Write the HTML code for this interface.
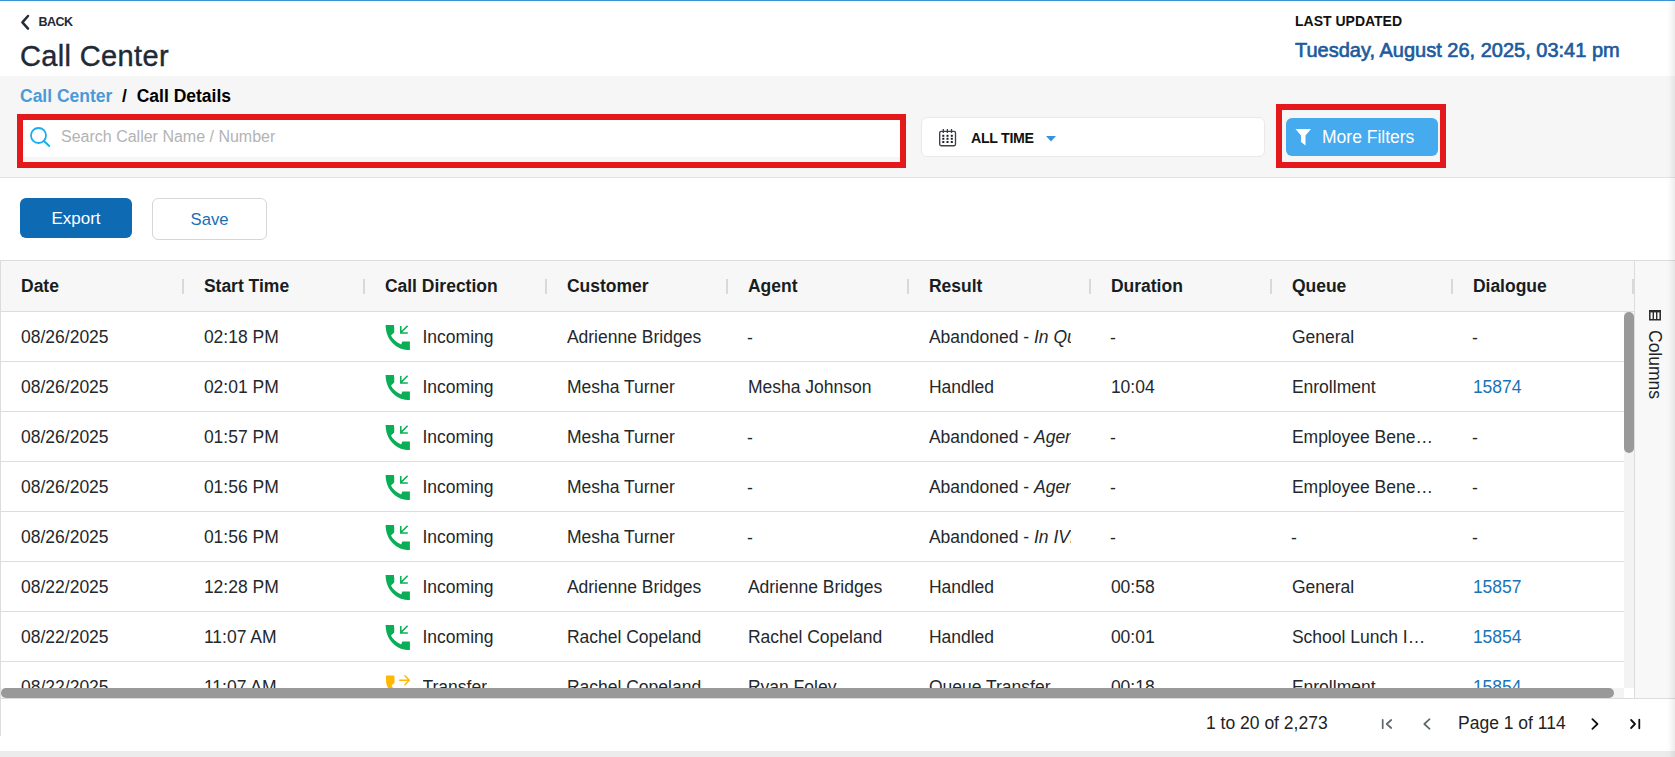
<!DOCTYPE html>
<html><head><meta charset="utf-8">
<style>
*{box-sizing:border-box;margin:0;padding:0}
html,body{width:1675px;height:757px;overflow:hidden;background:#fff;font-family:"Liberation Sans",sans-serif;color:#222}
.abs{position:absolute;white-space:nowrap}
#topline{left:0;top:0;width:1675px;height:1px;background:#3995d5}
#back{left:38.5px;top:15px;font-size:12.5px;font-weight:700;color:#1f2a37;letter-spacing:-0.55px}
#title{left:20px;top:40px;font-size:29px;color:#1f2a37;letter-spacing:0.35px;-webkit-text-stroke:0.4px #1f2a37}
#lu{left:1295px;top:13px;font-size:14px;font-weight:700;color:#111;letter-spacing:0}
#ludate{left:1295px;top:38.5px;font-size:20px;font-weight:400;color:#1d5b9d;letter-spacing:0px;-webkit-text-stroke:0.65px #1d5b9d}
#band{left:0;top:76px;width:1675px;height:102px;background:#f6f6f6;border-bottom:1px solid #e3e3e3}
#bc{left:20px;top:85.5px;font-size:17.5px;font-weight:700;color:#000}
#bc a{color:#4a9ad8;text-decoration:none}
#search{left:20px;top:118px;width:885px;height:39px;background:#fff;border-radius:4px}
#redA{left:17px;top:114px;width:889px;height:54px;border:6px solid #e3191b}
#ph{left:61px;top:128px;font-size:16px;color:#b3b3b3}
#datebox{left:921px;top:117px;width:344px;height:40px;background:#fff;border:1px solid #e9e9e9;border-radius:6px}
#alltime{left:971px;top:129.7px;font-size:14.2px;font-weight:700;color:#111;letter-spacing:-0.3px}
#redB{left:1276px;top:104px;width:170px;height:64px;border:6px solid #e3191b}
#mf{left:1286px;top:118px;width:152px;height:38px;background:#45aaee;border-radius:6px}
#mft{left:1322px;top:127px;font-size:17.5px;color:#fff}
#export{left:20px;top:198px;width:112px;height:40px;background:#0d6ab3;border-radius:6px}
#exportt{left:51.4px;top:209px;font-size:17px;color:#fff}
#save{left:152px;top:198px;width:115px;height:42px;background:#fff;border:1px solid #d6d6d6;border-radius:6px}
#savet{left:190.6px;top:210.2px;font-size:16.7px;color:#1a6fb5}
#grid{left:0;top:260px;width:1675px;height:476px;border-top:1px solid #dcdcdc;border-left:1px solid #dcdcdc}
#ghead{left:1px;top:261px;width:1633px;height:51px;background:#f7f7f7;border-bottom:1px solid #dddddd}
.hd{position:absolute;top:276px;font-size:17.5px;font-weight:700;color:#181d1f;white-space:nowrap}
.sep{position:absolute;top:279px;width:2px;height:15px;background:#d9d9d9}
.rowline{position:absolute;left:1px;width:1623px;height:1px;background:#dddddd}
.c{position:absolute;font-size:17.5px;color:#23282c;white-space:nowrap;overflow:hidden;text-overflow:ellipsis}
.lnk{color:#1a73b8}
#side{left:1634px;top:261px;width:41px;height:438px;background:#f8f8f8;border-left:1px solid #dcdcdc}
#vtrack{left:1624px;top:312px;width:10px;height:376px;background:#f3f3f3}
#vthumb{left:1624px;top:312px;width:10px;height:141px;background:#999;border-radius:5px}
#htrack{left:1px;top:688px;width:1623px;height:10px;background:#f3f3f3}
#hthumb{left:1px;top:688px;width:1613px;height:10px;background:#999;border-radius:5px}
#pag{left:1px;top:698px;width:1674px;height:38px;border-top:1px solid #dcdcdc;background:#fff}
#bottom{left:0;top:751px;width:1675px;height:6px;background:#ececec}
#redge{left:1666px;top:0;width:9px;height:757px;background:linear-gradient(to right,rgba(0,0,0,0),rgba(0,0,0,0.015) 40%,rgba(0,0,0,0.075))}

#chev{left:20px;top:14px}
#sicon{left:29px;top:126px}
#cal{left:938px;top:128px}
#tri{left:1046px;top:135.5px}
#funnel{left:1295px;top:128px}
#coltext{left:1665px;top:330px;font-size:17.5px;color:#222;transform-origin:0 0;transform:rotate(90deg)}
#colicon{left:1648px;top:309px}
#pagtxt{left:1206px;top:713px;font-size:17.5px;color:#222}
#pagpage{left:1458px;top:713px;font-size:17.5px;color:#222}
.pi{position:absolute}
</style></head><body>
<div class="abs" id="topline"></div>
<div class="abs" id="back">BACK</div>
<div class="abs" id="title">Call Center</div>
<div class="abs" id="lu">LAST UPDATED</div>
<div class="abs" id="ludate">Tuesday, August 26, 2025, 03:41 pm</div>

<div class="abs" id="band"></div>
<div class="abs" id="bc"><a>Call Center</a>&nbsp; / &nbsp;Call Details</div>
<div class="abs" id="search"></div>
<div class="abs" id="ph">Search Caller Name / Number</div>
<div class="abs" id="redA"></div>
<div class="abs" id="datebox"></div>
<div class="abs" id="alltime">ALL TIME</div>
<div class="abs" id="redB"></div>
<div class="abs" id="mf"></div>
<div class="abs" id="mft">More Filters</div>

<div class="abs" id="export"></div>
<div class="abs" id="exportt">Export</div>
<div class="abs" id="save"></div>
<div class="abs" id="savet">Save</div>

<div class="abs" id="grid"></div>
<div class="abs" id="ghead"></div>
<div id="rows"><div class="hd" style="left:21px">Date</div>
<div class="hd" style="left:203.9px">Start Time</div>
<div class="hd" style="left:384.9px">Call Direction</div>
<div class="hd" style="left:566.9px">Customer</div>
<div class="hd" style="left:747.9px">Agent</div>
<div class="hd" style="left:928.9px">Result</div>
<div class="hd" style="left:1110.9px">Duration</div>
<div class="hd" style="left:1291.9px">Queue</div>
<div class="hd" style="left:1472.9px">Dialogue</div>
<div class="sep" style="left:182px"></div>
<div class="sep" style="left:363px"></div>
<div class="sep" style="left:545px"></div>
<div class="sep" style="left:726px"></div>
<div class="sep" style="left:907px"></div>
<div class="sep" style="left:1089px"></div>
<div class="sep" style="left:1270px"></div>
<div class="sep" style="left:1451px"></div>
<div class="sep" style="left:1632px"></div>
<div class="c" style="left:21px;top:327px;width:142px;">08/26/2025</div>
<div class="c" style="left:203.9px;top:327px;width:142px;">02:18 PM</div>
<div class="abs" style="left:385px;top:325px;width:25px;height:25px"><svg class="ic" width="25" height="25" viewBox="0 0 25 25"><path fill="#0aae56" d="M0.6 0H8.9L9.3 3.6L9.2 7.6L6 10.5C7.6 13.8 10.8 17.1 16.2 19.6L17.3 16.6H24.9V25H22.5C10.5 24.4 0.6 14 0.6 0Z"/><path d="M407.6 325.8L401 332.4M400.8 326V332.9H407.8" transform="translate(-385 -325)" stroke="#0aae56" stroke-width="1.5" fill="none"/></svg></div>
<div class="c" style="left:422.5px;top:327px">Incoming</div>
<div class="c" style="left:566.9px;top:327px;width:142px;">Adrienne Bridges</div>
<div class="c" style="left:747.1px;top:328.3px;width:142px;">-</div>
<div class="c" style="left:928.9px;top:327px;width:142px;text-overflow:clip;">Abandoned - <i>In Queue</i></div>
<div class="c" style="left:1110.1000000000001px;top:328.3px;width:142px;">-</div>
<div class="c" style="left:1291.9px;top:327px;width:142px;">General</div>
<div class="c" style="left:1472.1000000000001px;top:328.3px;width:142px;">-</div>
<div class="rowline" style="top:361px"></div>
<div class="c" style="left:21px;top:377px;width:142px;">08/26/2025</div>
<div class="c" style="left:203.9px;top:377px;width:142px;">02:01 PM</div>
<div class="abs" style="left:385px;top:375px;width:25px;height:25px"><svg class="ic" width="25" height="25" viewBox="0 0 25 25"><path fill="#0aae56" d="M0.6 0H8.9L9.3 3.6L9.2 7.6L6 10.5C7.6 13.8 10.8 17.1 16.2 19.6L17.3 16.6H24.9V25H22.5C10.5 24.4 0.6 14 0.6 0Z"/><path d="M407.6 325.8L401 332.4M400.8 326V332.9H407.8" transform="translate(-385 -325)" stroke="#0aae56" stroke-width="1.5" fill="none"/></svg></div>
<div class="c" style="left:422.5px;top:377px">Incoming</div>
<div class="c" style="left:566.9px;top:377px;width:142px;">Mesha Turner</div>
<div class="c" style="left:747.9px;top:377px;width:142px;">Mesha Johnson</div>
<div class="c" style="left:928.9px;top:377px;width:142px;text-overflow:clip;">Handled</div>
<div class="c" style="left:1110.9px;top:377px;width:142px;">10:04</div>
<div class="c" style="left:1291.9px;top:377px;width:142px;">Enrollment</div>
<div class="c lnk" style="left:1472.9px;top:377px;width:142px;">15874</div>
<div class="rowline" style="top:411px"></div>
<div class="c" style="left:21px;top:427px;width:142px;">08/26/2025</div>
<div class="c" style="left:203.9px;top:427px;width:142px;">01:57 PM</div>
<div class="abs" style="left:385px;top:425px;width:25px;height:25px"><svg class="ic" width="25" height="25" viewBox="0 0 25 25"><path fill="#0aae56" d="M0.6 0H8.9L9.3 3.6L9.2 7.6L6 10.5C7.6 13.8 10.8 17.1 16.2 19.6L17.3 16.6H24.9V25H22.5C10.5 24.4 0.6 14 0.6 0Z"/><path d="M407.6 325.8L401 332.4M400.8 326V332.9H407.8" transform="translate(-385 -325)" stroke="#0aae56" stroke-width="1.5" fill="none"/></svg></div>
<div class="c" style="left:422.5px;top:427px">Incoming</div>
<div class="c" style="left:566.9px;top:427px;width:142px;">Mesha Turner</div>
<div class="c" style="left:747.1px;top:428.3px;width:142px;">-</div>
<div class="c" style="left:928.9px;top:427px;width:142px;text-overflow:clip;">Abandoned - <i>Agent Not Available</i></div>
<div class="c" style="left:1110.1000000000001px;top:428.3px;width:142px;">-</div>
<div class="c" style="left:1291.9px;top:427px;width:142px;">Employee Benefits</div>
<div class="c" style="left:1472.1000000000001px;top:428.3px;width:142px;">-</div>
<div class="rowline" style="top:461px"></div>
<div class="c" style="left:21px;top:477px;width:142px;">08/26/2025</div>
<div class="c" style="left:203.9px;top:477px;width:142px;">01:56 PM</div>
<div class="abs" style="left:385px;top:475px;width:25px;height:25px"><svg class="ic" width="25" height="25" viewBox="0 0 25 25"><path fill="#0aae56" d="M0.6 0H8.9L9.3 3.6L9.2 7.6L6 10.5C7.6 13.8 10.8 17.1 16.2 19.6L17.3 16.6H24.9V25H22.5C10.5 24.4 0.6 14 0.6 0Z"/><path d="M407.6 325.8L401 332.4M400.8 326V332.9H407.8" transform="translate(-385 -325)" stroke="#0aae56" stroke-width="1.5" fill="none"/></svg></div>
<div class="c" style="left:422.5px;top:477px">Incoming</div>
<div class="c" style="left:566.9px;top:477px;width:142px;">Mesha Turner</div>
<div class="c" style="left:747.1px;top:478.3px;width:142px;">-</div>
<div class="c" style="left:928.9px;top:477px;width:142px;text-overflow:clip;">Abandoned - <i>Agent Not Available</i></div>
<div class="c" style="left:1110.1000000000001px;top:478.3px;width:142px;">-</div>
<div class="c" style="left:1291.9px;top:477px;width:142px;">Employee Benefits</div>
<div class="c" style="left:1472.1000000000001px;top:478.3px;width:142px;">-</div>
<div class="rowline" style="top:511px"></div>
<div class="c" style="left:21px;top:527px;width:142px;">08/26/2025</div>
<div class="c" style="left:203.9px;top:527px;width:142px;">01:56 PM</div>
<div class="abs" style="left:385px;top:525px;width:25px;height:25px"><svg class="ic" width="25" height="25" viewBox="0 0 25 25"><path fill="#0aae56" d="M0.6 0H8.9L9.3 3.6L9.2 7.6L6 10.5C7.6 13.8 10.8 17.1 16.2 19.6L17.3 16.6H24.9V25H22.5C10.5 24.4 0.6 14 0.6 0Z"/><path d="M407.6 325.8L401 332.4M400.8 326V332.9H407.8" transform="translate(-385 -325)" stroke="#0aae56" stroke-width="1.5" fill="none"/></svg></div>
<div class="c" style="left:422.5px;top:527px">Incoming</div>
<div class="c" style="left:566.9px;top:527px;width:142px;">Mesha Turner</div>
<div class="c" style="left:747.1px;top:528.3px;width:142px;">-</div>
<div class="c" style="left:928.9px;top:527px;width:142px;text-overflow:clip;">Abandoned - <i>In IVR</i></div>
<div class="c" style="left:1110.1000000000001px;top:528.3px;width:142px;">-</div>
<div class="c" style="left:1291.1000000000001px;top:528.3px;width:142px;">-</div>
<div class="c" style="left:1472.1000000000001px;top:528.3px;width:142px;">-</div>
<div class="rowline" style="top:561px"></div>
<div class="c" style="left:21px;top:577px;width:142px;">08/22/2025</div>
<div class="c" style="left:203.9px;top:577px;width:142px;">12:28 PM</div>
<div class="abs" style="left:385px;top:575px;width:25px;height:25px"><svg class="ic" width="25" height="25" viewBox="0 0 25 25"><path fill="#0aae56" d="M0.6 0H8.9L9.3 3.6L9.2 7.6L6 10.5C7.6 13.8 10.8 17.1 16.2 19.6L17.3 16.6H24.9V25H22.5C10.5 24.4 0.6 14 0.6 0Z"/><path d="M407.6 325.8L401 332.4M400.8 326V332.9H407.8" transform="translate(-385 -325)" stroke="#0aae56" stroke-width="1.5" fill="none"/></svg></div>
<div class="c" style="left:422.5px;top:577px">Incoming</div>
<div class="c" style="left:566.9px;top:577px;width:142px;">Adrienne Bridges</div>
<div class="c" style="left:747.9px;top:577px;width:142px;">Adrienne Bridges</div>
<div class="c" style="left:928.9px;top:577px;width:142px;text-overflow:clip;">Handled</div>
<div class="c" style="left:1110.9px;top:577px;width:142px;">00:58</div>
<div class="c" style="left:1291.9px;top:577px;width:142px;">General</div>
<div class="c lnk" style="left:1472.9px;top:577px;width:142px;">15857</div>
<div class="rowline" style="top:611px"></div>
<div class="c" style="left:21px;top:627px;width:142px;">08/22/2025</div>
<div class="c" style="left:203.9px;top:627px;width:142px;">11:07 AM</div>
<div class="abs" style="left:385px;top:625px;width:25px;height:25px"><svg class="ic" width="25" height="25" viewBox="0 0 25 25"><path fill="#0aae56" d="M0.6 0H8.9L9.3 3.6L9.2 7.6L6 10.5C7.6 13.8 10.8 17.1 16.2 19.6L17.3 16.6H24.9V25H22.5C10.5 24.4 0.6 14 0.6 0Z"/><path d="M407.6 325.8L401 332.4M400.8 326V332.9H407.8" transform="translate(-385 -325)" stroke="#0aae56" stroke-width="1.5" fill="none"/></svg></div>
<div class="c" style="left:422.5px;top:627px">Incoming</div>
<div class="c" style="left:566.9px;top:627px;width:142px;">Rachel Copeland</div>
<div class="c" style="left:747.9px;top:627px;width:142px;">Rachel Copeland</div>
<div class="c" style="left:928.9px;top:627px;width:142px;text-overflow:clip;">Handled</div>
<div class="c" style="left:1110.9px;top:627px;width:142px;">00:01</div>
<div class="c" style="left:1291.9px;top:627px;width:142px;">School Lunch Inquiry</div>
<div class="c lnk" style="left:1472.9px;top:627px;width:142px;">15854</div>
<div class="rowline" style="top:661px"></div>
<div class="c" style="left:21px;top:677px;width:142px;">08/22/2025</div>
<div class="c" style="left:203.9px;top:677px;width:142px;">11:07 AM</div>
<div class="abs" style="left:385px;top:675px;width:25px;height:25px"><svg class="ic" width="25" height="25" viewBox="0 0 25 25"><path fill="#ffb800" d="M1.6 0.6Q1 0.6 1 1.3L1.1 7C1.6 14 10.5 24.4 22.5 25H24.9V16.6H17.3L16.2 19.6C10.8 17.1 8.2 13.8 6.6 10.5L9.3 8.1L9.6 6.5L9.4 1.3Q9.3 0.6 8.7 0.6Z"/><path d="M14.7 5.3H24.3M19.9 0.8L24.3 5.3L19.9 9.8" stroke="#ffb800" stroke-width="1.4" stroke-linecap="round" stroke-linejoin="round" fill="none"/></svg></div>
<div class="c" style="left:422.5px;top:677px">Transfer</div>
<div class="c" style="left:566.9px;top:677px;width:142px;">Rachel Copeland</div>
<div class="c" style="left:747.9px;top:677px;width:142px;">Ryan Foley</div>
<div class="c" style="left:928.9px;top:677px;width:142px;text-overflow:clip;">Queue Transfer</div>
<div class="c" style="left:1110.9px;top:677px;width:142px;">00:18</div>
<div class="c" style="left:1291.9px;top:677px;width:142px;">Enrollment</div>
<div class="c lnk" style="left:1472.9px;top:677px;width:142px;">15854</div></div><!--/rows-->
<div class="abs" id="side"></div>
<div class="abs" id="vtrack"></div>
<div class="abs" id="vthumb"></div>
<div class="abs" id="htrack"></div>
<div class="abs" id="hthumb"></div>
<div class="abs" id="pag"></div>
<div class="abs" id="bottom"></div>
<svg class="abs" id="chev" width="10" height="17" viewBox="0 0 10 17"><path d="M8 2L2.4 8.3L8 14.6" stroke="#262d38" stroke-width="2.5" stroke-linecap="round" stroke-linejoin="round" fill="none"/></svg>
<svg class="abs" id="sicon" width="23" height="23" viewBox="0 0 23 23"><circle cx="9.5" cy="9.5" r="7.5" stroke="#18adf1" stroke-width="1.8" fill="none"/><path d="M15 15L20.2 19.9" stroke="#18adf1" stroke-width="2" stroke-linecap="round" fill="none"/></svg>
<svg class="abs" id="cal" width="19" height="19" viewBox="0 0 19 19"><rect x="1.7" y="3.4" width="15.8" height="14.3" rx="1.4" stroke="#3b4049" stroke-width="1.35" fill="none"/><path d="M5.3 1V5M9.4 1V5M13.5 1V5" stroke="#3b4049" stroke-width="1.3"/><g fill="#1d2129"><rect x="4.3" y="6.8" width="2" height="2"/><rect x="8.5" y="6.8" width="2" height="2"/><rect x="12.8" y="6.8" width="2" height="2"/><rect x="4.3" y="9.8" width="2" height="2"/><rect x="8.5" y="9.8" width="2" height="2"/><rect x="12.8" y="9.8" width="2" height="2"/><rect x="4.3" y="13" width="2" height="2"/><rect x="8.5" y="13" width="2" height="2"/><rect x="12.8" y="13" width="2" height="2"/></g></svg>
<svg class="abs" id="tri" width="10" height="6" viewBox="0 0 10 6"><path d="M0 0H10L5 5.5Z" fill="#3a90da"/></svg>
<svg class="abs" id="funnel" width="17" height="18" viewBox="0 0 17 18"><path d="M0.5 1H16L10.5 7.5V17.5L6 14V7.5Z" fill="#fff"/></svg>
<svg class="abs" id="colicon" width="14" height="13" viewBox="0 0 14 13"><path d="M1.8 2.2V10.8H12.2V2.2" stroke="#2b2b2b" stroke-width="1.5" fill="none"/><rect x="1" y="1" width="12" height="2.4" fill="#2b2b2b"/><path d="M5.3 3V10.5M8.7 3V10.5" stroke="#2b2b2b" stroke-width="1.4"/></svg>
<div class="abs" id="coltext">Columns</div>
<div class="abs" id="pagtxt">1 to 20 of 2,273</div>
<svg class="abs" style="left:1370px;top:710px" width="280" height="30" viewBox="1370 710 280 30"><g fill="none" stroke-linecap="round" stroke-linejoin="round">
<path d="M1382.7 719.8V728.2M1391.2 720L1386.7 724L1391.2 728" stroke="#60676b" stroke-width="1.7"/>
<path d="M1429.6 719.2L1424.3 724L1429.6 728.8" stroke="#60676b" stroke-width="1.7"/>
<path d="M1592.4 719.2L1597.5 724L1592.4 728.8" stroke="#111" stroke-width="1.8"/>
<path d="M1631.1 720L1635 724L1631.1 728M1639.3 719.6V728.3" stroke="#111" stroke-width="1.8"/>
</g></svg>
<div class="abs" id="pagpage">Page 1 of 114</div>

<div class="abs" id="redge"></div>
</body></html>
